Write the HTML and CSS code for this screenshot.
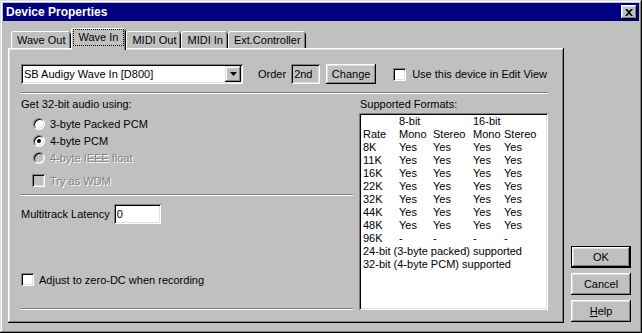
FILE: index.html
```html
<!DOCTYPE html>
<html lang="en">
<head>
  <meta charset="UTF-8">
  <title>Device Properties</title>
  <link rel="stylesheet" href="styles.css">
</head>
<body>
  <div class="window">
    <div class="titlebar">
      <span>Device Properties</span>
      <div class="close">
        <svg width="8" height="7" viewBox="0 0 8 7"><path d="M0 0h2l2 2 2-2h2L5 3.5 8 7H6L4 5 2 7H0l3-3.5z" fill="#000"/></svg>
      </div>
    </div>

    <div class="body">
      <div class="tabset">
        <div class="tabs">
          <div class="tab">Wave Out</div>
          <div class="tab active"><span class="focus">Wave In</span></div>
          <div class="tab">MIDI Out</div>
          <div class="tab">MIDI In</div>
          <div class="tab">Ext.Controller</div>
        </div>

        <div class="panel">
          <div class="device-row">
            <div class="combo">
              <span class="combo-text">SB Audigy Wave In [D800]</span>
              <span class="combo-arrow"><svg width="7" height="4" viewBox="0 0 7 4"><path d="M0 0h7L3.5 4z" fill="#000"/></svg></span>
            </div>
            <span class="order-label">Order</span>
            <div class="field readonly order">2nd</div>
            <div class="button change">Change</div>
            <label class="check-row edit-view"><span class="checkbox"></span>Use this device in Edit View</label>
          </div>

          <div class="sep"></div>

          <div class="columns">
            <div class="left">
              <div class="label">Get 32-bit audio using:</div>
              <div class="radios">
                <div class="radio-row"><span class="radio"></span>3-byte Packed PCM</div>
                <div class="radio-row"><span class="radio checked"></span>4-byte PCM</div>
                <div class="radio-row disabled"><span class="radio"></span>4-byte IEEE float</div>
              </div>
              <div class="check-row wdm disabled"><span class="checkbox"></span>Try as WDM</div>
              <div class="sep mid"></div>
              <div class="latency-row">
                <span>Multitrack Latency</span>
                <div class="field latency">0</div>
              </div>
              <div class="check-row zero-dc"><span class="checkbox"></span>Adjust to zero-DC when recording</div>
              <div class="sep bottom"></div>
            </div>

            <div class="right">
              <div class="label formats-label">Supported Formats:</div>
              <div class="listbox">
                <div class="formats">
                  <span></span><span>8-bit</span><span></span><span>16-bit</span><span></span>
                  <span>Rate</span><span>Mono</span><span>Stereo</span><span>Mono</span><span>Stereo</span>
                  <span>8K</span><span>Yes</span><span>Yes</span><span>Yes</span><span>Yes</span>
                  <span>11K</span><span>Yes</span><span>Yes</span><span>Yes</span><span>Yes</span>
                  <span>16K</span><span>Yes</span><span>Yes</span><span>Yes</span><span>Yes</span>
                  <span>22K</span><span>Yes</span><span>Yes</span><span>Yes</span><span>Yes</span>
                  <span>32K</span><span>Yes</span><span>Yes</span><span>Yes</span><span>Yes</span>
                  <span>44K</span><span>Yes</span><span>Yes</span><span>Yes</span><span>Yes</span>
                  <span>48K</span><span>Yes</span><span>Yes</span><span>Yes</span><span>Yes</span>
                  <span>96K</span><span>-</span><span>-</span><span>-</span><span>-</span>
                  <span class="wide">24-bit (3-byte packed) supported</span>
                  <span class="wide">32-bit (4-byte PCM) supported</span>
                </div>
              </div>
            </div>
          </div>
        </div>
      </div>

      <div class="actions">
        <div class="button default">OK</div>
        <div class="button">Cancel</div>
        <div class="button"><u>H</u>elp</div>
      </div>
    </div>
  </div>
</body>
</html>
```

FILE: styles.css
```css
* {
  box-sizing: border-box;
}

body {
  margin: 0;
  background: #c0c0c0;
  font-family: "Liberation Sans", Arial, sans-serif;
  font-size: 11px;
  color: #000;
}

/* window frame */
.window {
  width: 642px;
  height: 333px;
  padding: 3px;
  display: flex;
  flex-direction: column;
  background: #c0c0c0;
  box-shadow: inset -1px -1px #000, inset 1px 1px #dfdfdf,
              inset -2px -2px #808080, inset 2px 2px #fff;
}

.titlebar {
  flex: none;
  height: 18px;
  display: flex;
  align-items: center;
  justify-content: space-between;
  padding: 0 2px 0 3px;
  background: #000080;
  color: #fff;
  font-size: 12px;
  font-weight: bold;
}

.close {
  width: 16px;
  height: 14px;
  display: flex;
  align-items: center;
  justify-content: center;
  background: #c0c0c0;
  box-shadow: inset -1px -1px #000, inset 1px 1px #fff,
              inset -2px -2px #808080, inset 2px 2px #dfdfdf;
}

.body {
  flex: 1;
  display: flex;
  align-items: flex-end;
  gap: 7px;
  padding: 7px 0 7px 5px;
}

/* tabs */
.tabset {
  width: 556px;
}

.tabs {
  height: 20px;
  display: flex;
  align-items: flex-end;
  padding-left: 3px;
}

.tab {
  height: 17px;
  padding: 2px 5px 0 6px;
  line-height: 14px;
  border-radius: 3px 3px 0 0;
  box-shadow: inset 1px 0 #fff, inset 0 1px #fff,
              inset -1px 0 #000, inset -2px 0 #808080;
}

.tab.active {
  position: relative;
  z-index: 1;
  height: 22px;
  margin-bottom: -2px;
  padding: 2px 3px 0;
  background: #c0c0c0;
}

.focus {
  display: block;
  padding: 1px 5px;
  line-height: 13px;
  outline: 1px dotted #000;
}

.panel {
  height: 275px;
  display: flex;
  flex-direction: column;
  padding: 16px 16px 13px 13px;
  box-shadow: inset -1px -1px #000, inset 1px 1px #fff,
              inset -2px -2px #808080, inset 2px 2px #dfdfdf;
}

/* shared controls */
.sep {
  height: 2px;
  border-top: 1px solid #808080;
  border-bottom: 1px solid #fff;
}

.button {
  height: 22px;
  display: flex;
  align-items: center;
  justify-content: center;
  background: #c0c0c0;
  box-shadow: inset -1px -1px #000, inset 1px 1px #fff,
              inset -2px -2px #808080, inset 2px 2px #dfdfdf;
}

.button.default {
  border: 1px solid #000;
}

.field {
  height: 20px;
  padding: 2px 3px;
  line-height: 16px;
  background: #fff;
  box-shadow: inset 1px 1px #808080, inset -1px -1px #fff,
              inset 2px 2px #000, inset -2px -2px #dfdfdf;
}

.field.readonly {
  background: #c0c0c0;
}

.checkbox {
  width: 13px;
  height: 13px;
  flex: none;
  background: #fff;
  box-shadow: inset 1px 1px #808080, inset -1px -1px #fff,
              inset 2px 2px #000, inset -2px -2px #dfdfdf;
}

.check-row {
  height: 17px;
  display: flex;
  align-items: center;
  gap: 5px;
}

.radio {
  position: relative;
  width: 12px;
  height: 12px;
  flex: none;
  border-radius: 50%;
  background: #fff;
  border: 1px solid;
  border-color: #808080 #fff #fff #808080;
  box-shadow: inset 1px 1px #000, inset -1px -1px #dfdfdf;
}

.radio.checked::after {
  content: "";
  position: absolute;
  left: 3px;
  top: 3px;
  width: 4px;
  height: 4px;
  border-radius: 50%;
  background: #000;
}

.disabled {
  color: #808080;
  text-shadow: 1px 1px 0 #fff;
}

.disabled .radio,
.disabled .checkbox {
  background: #c0c0c0;
}

/* first row */
.device-row {
  height: 20px;
  display: flex;
  align-items: center;
}

.combo {
  width: 222px;
  height: 20px;
  display: flex;
  padding: 2px;
  background: #fff;
  box-shadow: inset 1px 1px #808080, inset -1px -1px #fff,
              inset 2px 2px #000, inset -2px -2px #dfdfdf;
}

.combo-text {
  flex: 1;
  padding-left: 1px;
  line-height: 16px;
}

.combo-arrow {
  width: 16px;
  height: 16px;
  display: flex;
  align-items: center;
  justify-content: center;
  background: #c0c0c0;
  box-shadow: inset -1px -1px #000, inset 1px 1px #dfdfdf,
              inset -2px -2px #808080, inset 2px 2px #fff;
}

.order-label {
  margin: 0 5px 0 15px;
}

.order {
  width: 29px;
}

.button.change {
  width: 50px;
  height: 20px;
  margin-left: 6px;
}

.edit-view {
  margin-left: 17px;
  gap: 6px;
}

.device-row + .sep {
  margin-top: 8px;
}

/* two columns */
.columns {
  flex: 1;
  display: flex;
  gap: 6px;
}

.left {
  width: 332px;
  display: flex;
  flex-direction: column;
}

.right {
  flex: 1;
  display: flex;
  flex-direction: column;
}

.label {
  margin-top: 4px;
  line-height: 13px;
}

.formats-label {
  padding-left: 1px;
}

.radios {
  margin-top: 4px;
  padding-left: 12px;
}

.radio-row {
  height: 17px;
  display: flex;
  align-items: center;
  gap: 5px;
}

.wdm {
  margin-top: 6px;
  padding-left: 11px;
}

.sep.mid {
  margin-top: 5px;
}

.latency-row {
  margin-top: 8px;
  display: flex;
  align-items: center;
  gap: 4px;
}

.latency {
  width: 47px;
}

.zero-dc {
  margin-top: auto;
}

.sep.bottom {
  margin-top: 20px;
}

.listbox {
  flex: 1;
  margin-top: 2px;
  padding: 2px 2px 2px 4px;
  background: #fff;
  box-shadow: inset 1px 1px #808080, inset -1px -1px #fff,
              inset 2px 2px #000, inset -2px -2px #dfdfdf;
}

.formats {
  display: grid;
  grid-template-columns: 36px 34px 40px 31px auto;
  grid-auto-rows: 13px;
  line-height: 13px;
}

.formats .wide {
  grid-column: 1 / -1;
}

/* dialog buttons */
.actions {
  width: 60px;
  margin-bottom: 1px;
  display: flex;
  flex-direction: column;
  gap: 5px;
}
```
